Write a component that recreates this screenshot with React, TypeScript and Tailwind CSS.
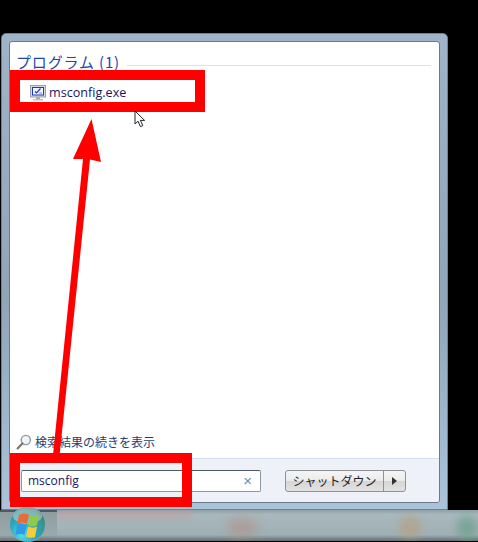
import React from 'react'

// ── Small drawings ───────────────────────────────────────────────────────────

function MonitorIcon() {
  return (
    <svg width="16" height="16" viewBox="0 0 16 16" className="shrink-0">
      <rect x="0.5" y="0.5" width="15" height="11.5" fill="#d5d9e0" stroke="#9aa1ad" />
      <rect x="2" y="2" width="12" height="8.5" fill="#1c38c4" />
      <rect x="3" y="3" width="10" height="6.5" fill="#f4f6ff" />
      <path d="M5 6.5 L6.5 8 L10.5 3.5" stroke="#1c38c4" strokeWidth="1.2" fill="none" />
      <path d="M9 8h3" stroke="#6d86d8" strokeWidth="1" />
      <rect x="6" y="12" width="4" height="2" fill="#a6acb6" />
      <rect x="3" y="14" width="10" height="1.5" fill="#bcc1ca" />
    </svg>
  )
}

function SearchGlass() {
  return (
    <svg width="16" height="16" viewBox="0 0 16 16" className="shrink-0">
      <circle cx="9.8" cy="6" r="4.6" fill="#eef4f8" stroke="#8b99a6" strokeWidth="1.4" />
      <path d="M6.4 9.4 L1.6 14.4" stroke="#7f7466" strokeWidth="2.2" strokeLinecap="round" />
    </svg>
  )
}

function Cursor() {
  return (
    <svg width="14" height="18" viewBox="0 0 14 18" className="absolute left-[134px] top-[110px]">
      <path
        d="M1 1 V14 L4 11.2 L6.4 16.6 L8.8 15.6 L6.4 10.4 H10.6 Z"
        fill="#fff"
        stroke="#222"
        strokeWidth="1"
        strokeLinejoin="round"
      />
    </svg>
  )
}

function Arrow() {
  return (
    <svg width="110" height="345" viewBox="0 0 110 345" className="absolute left-0 top-[118px]">
      <path d="M91.5 1 L101 44 L90 41.5 L59.3 340 L52.7 340 L83 41 L73 41 Z" fill="#ff0000" />
    </svg>
  )
}

function StartOrb() {
  return (
    <div className="relative -mt-[5px] ml-[9px] h-[35px] w-[37px] shrink-0 overflow-hidden rounded-full border border-[#8fa5ac] bg-[radial-gradient(circle_at_35%_80%,#4fe0e8_0%,#2aa6c0_40%,#3f8f86_70%,#24505e_100%)]">
      <svg width="37" height="35" viewBox="0 0 37 35" className="absolute -left-px -top-px">
        <ellipse cx="18.5" cy="8" rx="15" ry="9" fill="#fff" opacity="0.35" />
        <path d="M10 8 C13 6 16 6 20 8 L18 17 C15 15 12 15 8 17 Z" fill="#ee6a35" />
        <path d="M21 8.5 C24 10 27 10 30 8 L28 18 C25 20 22 20 19 18 Z" fill="#8fcb45" />
        <path d="M8 18 C11 16.5 14 16.5 17.5 18.5 L15.5 28 C13 26.5 10 26.5 6.5 28 Z" fill="#2f9be8" />
        <path d="M19 19.5 C22 21 25 21 28 19.5 L26 30 C23 31 20 31 17 29.5 Z" fill="#f9cb3a" />
      </svg>
    </div>
  )
}

// ── Component ────────────────────────────────────────────────────────────────

export default function App() {
  return (
    <div className="relative flex h-[542px] w-[478px] flex-col overflow-hidden bg-black font-['Noto_Sans_CJK_JP',sans-serif]">
      <div className="h-[33px] shrink-0" />

      {/* Start menu */}
      <div className="ml-px flex h-[477px] w-[447px] shrink-0 flex-col rounded-t-[5px] border border-[#6f8192] bg-[linear-gradient(180deg,#9fb4c8_0%,#8fa5b8_55%,#a9c4da_100%)] px-[7px] pb-[6px] pt-[7px]">
        <div className="flex flex-1 flex-col rounded-[3px] border border-[#6c7a88] bg-white">
          <div className="flex flex-1 flex-col pl-[6px] pr-[8px]">
            <div className="flex h-[25px] items-end">
              <span className="-mb-[5px] text-[15px] leading-[20px] tracking-[0.85px] text-[#1c48a8]">プログラム (1)</span>
              <div className="mb-[1px] ml-[7px] h-px flex-1 bg-[#dfe3e8]" />
            </div>
            <div className="ml-[14px] mt-[18px] flex items-center gap-[3px]">
              <MonitorIcon />
              <span className="font-['Open_Sans',sans-serif] text-[12.6px] leading-[16px] text-[#1b1464]">msconfig.exe</span>
            </div>
            <div className="mb-[8px] mt-auto flex items-center gap-[3px]">
              <SearchGlass />
              <span className="text-[12px] leading-[16px] text-[#1f3f72]">検索結果の続きを表示</span>
            </div>
          </div>

          {/* Search + shutdown row */}
          <div className="flex h-[44px] shrink-0 items-center rounded-b-[3px] border-t border-[#d3dfee] bg-[#eef2f8] pl-[11px]">
            <div className="flex h-[22px] w-[240px] items-center justify-between rounded-[2px] border border-[#8a97a6] border-t-[#4f5a66] bg-white pl-[6px] pr-[8px]">
              <span className="font-['Open_Sans',sans-serif] text-[12px] leading-[16px] text-[#1b1464]">msconfig</span>
              <span className="font-['Liberation_Sans',sans-serif] text-[15px] leading-[14px] text-[#5c93b8]">×</span>
            </div>
            <div className="ml-[24px] flex h-[22px] w-[121px] rounded-[3px] border border-[#8d9299] bg-[linear-gradient(180deg,#f5f5f5_0%,#ebebeb_48%,#d6d6d6_52%,#e2e2e2_100%)]">
              <div className="flex w-[98px] items-center justify-center border-r border-[#8d9299]">
                <span className="whitespace-nowrap text-[12px] leading-[16px] text-[#222]">シャットダウン</span>
              </div>
              <div className="flex flex-1 items-center justify-center">
                <div className="h-0 w-0 border-y-[4px] border-l-[5px] border-y-transparent border-l-[#333]" />
              </div>
            </div>
          </div>
        </div>
      </div>

      {/* Taskbar */}
      <div className="flex h-[31px] w-full shrink-0 bg-[linear-gradient(180deg,#8fa0a5_0%,#a8b8bd_15%,#a0b0b5_80%,#5f6d72_100%)]">
        <div className="flex w-[57px] shrink-0 border-t-2 border-[#4d5a62] bg-[linear-gradient(180deg,#8f9d9f_0%,#9aa9ac_80%,#5f6d72_100%)]">
          <StartOrb />
        </div>
        <div className="relative flex-1 overflow-hidden">
          <div className="absolute left-0 top-0 h-[8px] w-[135px] bg-[#c39a9c] opacity-60 blur-[3px]" />
          <div className="absolute left-[170px] top-[8px] h-[20px] w-[30px] rounded-full bg-[#b08f87] opacity-60 blur-[6px]" />
          <div className="absolute left-[342px] top-[6px] h-[22px] w-[22px] rounded-full bg-[#b7a07e] opacity-70 blur-[5px]" />
          <div className="absolute left-[400px] top-[6px] h-[24px] w-[20px] rounded-full bg-[#6fa08c] opacity-80 blur-[5px]" />
        </div>
      </div>
      <div className="h-px w-full shrink-0 bg-black" />

      {/* Annotations drawn on the capture */}
      <div className="absolute left-[10px] top-[70px] h-[42px] w-[195px] border-[10px] border-[#ff0000]" />
      <div className="absolute left-[10px] top-[453px] h-[54px] w-[182px] border-[10px] border-[#ff0000]" />
      <Arrow />
      <Cursor />
    </div>
  )
}
